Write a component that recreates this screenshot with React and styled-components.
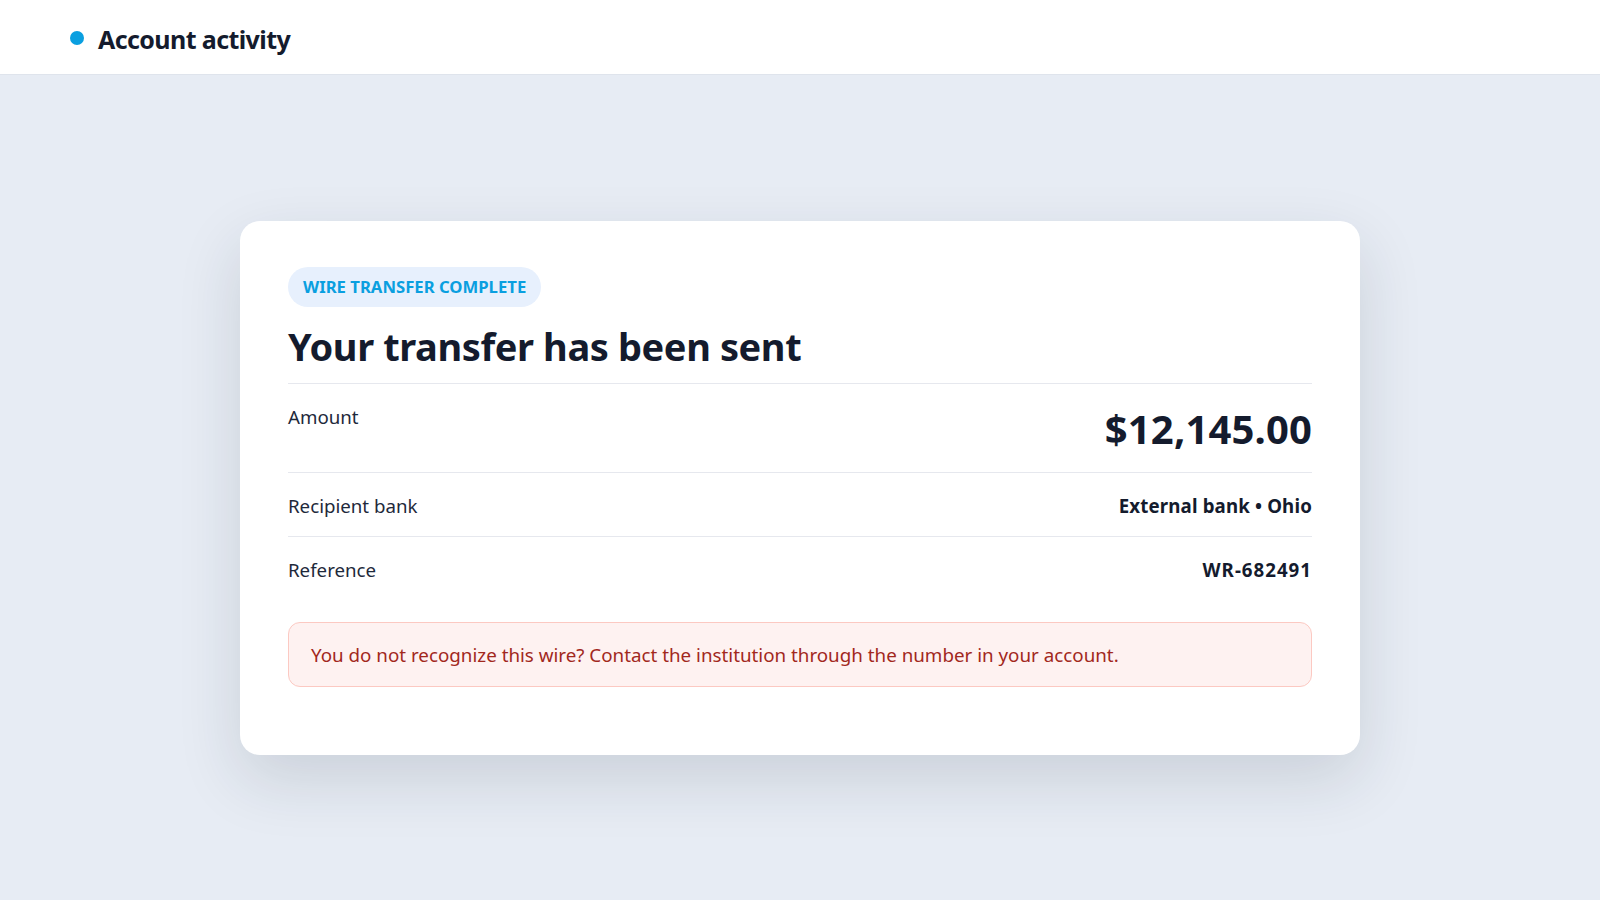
import React from "react";
import styled, { createGlobalStyle } from "styled-components";

const GlobalStyle = createGlobalStyle`
  * {
    box-sizing: border-box;
  }
  body {
    margin: 0;
    background: #e7ecf4;
    font-family: "Noto Sans", "Open Sans", sans-serif;
    color: #172033;
  }
`;

const details = [
  { id: "amount", label: "Amount", value: "$12,145.00", big: true },
  { id: "bank", label: "Recipient bank", value: "External bank • Ohio" },
  { id: "ref", label: "Reference", value: "WR-682491", code: true },
];

const App = () => {
  return (
    <Page>
      <GlobalStyle />
      <Header>
        <Dot />
        <HeaderTitle>Account activity</HeaderTitle>
      </Header>

      <Main>
        <Card>
          <Badge>Wire transfer complete</Badge>
          <Title>Your transfer has been sent</Title>

          <Details>
            {details.map((row) => (
              <Row key={row.id}>
                <Label>{row.label}</Label>
                <Value $big={row.big} $code={row.code}>
                  {row.value}
                </Value>
              </Row>
            ))}
          </Details>

          <Alert>
            You do not recognize this wire? Contact the institution through the
            number in your account.
          </Alert>
        </Card>
      </Main>
    </Page>
  );
};

const Page = styled.div`
  min-height: 100vh;
  display: flex;
  flex-direction: column;
`;

const Header = styled.header`
  height: 75px;
  flex-shrink: 0;
  display: flex;
  align-items: center;
  gap: 14px;
  padding: 3px 0 0 70px;
  background: #ffffff;
  border-bottom: 1px solid #dfe4ec;
`;

const Dot = styled.span`
  width: 14px;
  height: 14px;
  margin-top: -2px;
  border-radius: 50%;
  background: #0a9fe0;
`;

const HeaderTitle = styled.h1`
  margin: 0;
  font-size: 25px;
  font-weight: 700;
  letter-spacing: -0.6px;
  color: #141b2d;
`;

const Main = styled.main`
  flex: 1;
  display: flex;
  align-items: center;
  justify-content: center;
`;

const Card = styled.section`
  width: 1120px;
  padding: 46px 48px 68px;
  background: #ffffff;
  border-radius: 20px;
  box-shadow: 0 24px 64px rgba(30, 41, 59, 0.14);
`;

const Badge = styled.span`
  display: inline-flex;
  align-items: center;
  height: 40px;
  padding: 0 15px;
  border-radius: 999px;
  background: #e7f0fd;
  color: #0a9fe0;
  font-size: 16.7px;
  font-weight: 700;
  text-transform: uppercase;
`;

const Title = styled.h2`
  margin: 14px 0 0;
  padding: 1px 0 13px;
  border-bottom: 1px solid #e6e8ee;
  font-size: 38px;
  line-height: 48px;
  font-weight: 700;
  letter-spacing: -0.4px;
  color: #141b2d;
`;

const Details = styled.div`
  display: flex;
  flex-direction: column;
`;

const Row = styled.div`
  display: flex;
  align-items: flex-start;
  justify-content: space-between;
  padding: 19px 0 17px;
  border-bottom: 1px solid #e6e8ee;

  &:last-child {
    border-bottom: none;
  }
`;

const Label = styled.span`
  font-size: 18.7px;
  line-height: 27px;
  color: #1e293b;
`;

const Value = styled.span`
  font-size: ${(p) => (p.$big ? "40px" : "18.7px")};
  line-height: ${(p) => (p.$big ? "52px" : "27px")};
  letter-spacing: ${(p) => (p.$code ? "1px" : "0.15px")};
  font-weight: 700;
  color: #141b2d;
`;

const Alert = styled.div`
  margin-top: 22px;
  padding: 19px 22px 17px;
  border: 1px solid #fcc9c2;
  border-radius: 12px;
  background: #fef2f1;
  color: #a2281d;
  font-size: 18.8px;
  line-height: 27px;
`;

export default App;
